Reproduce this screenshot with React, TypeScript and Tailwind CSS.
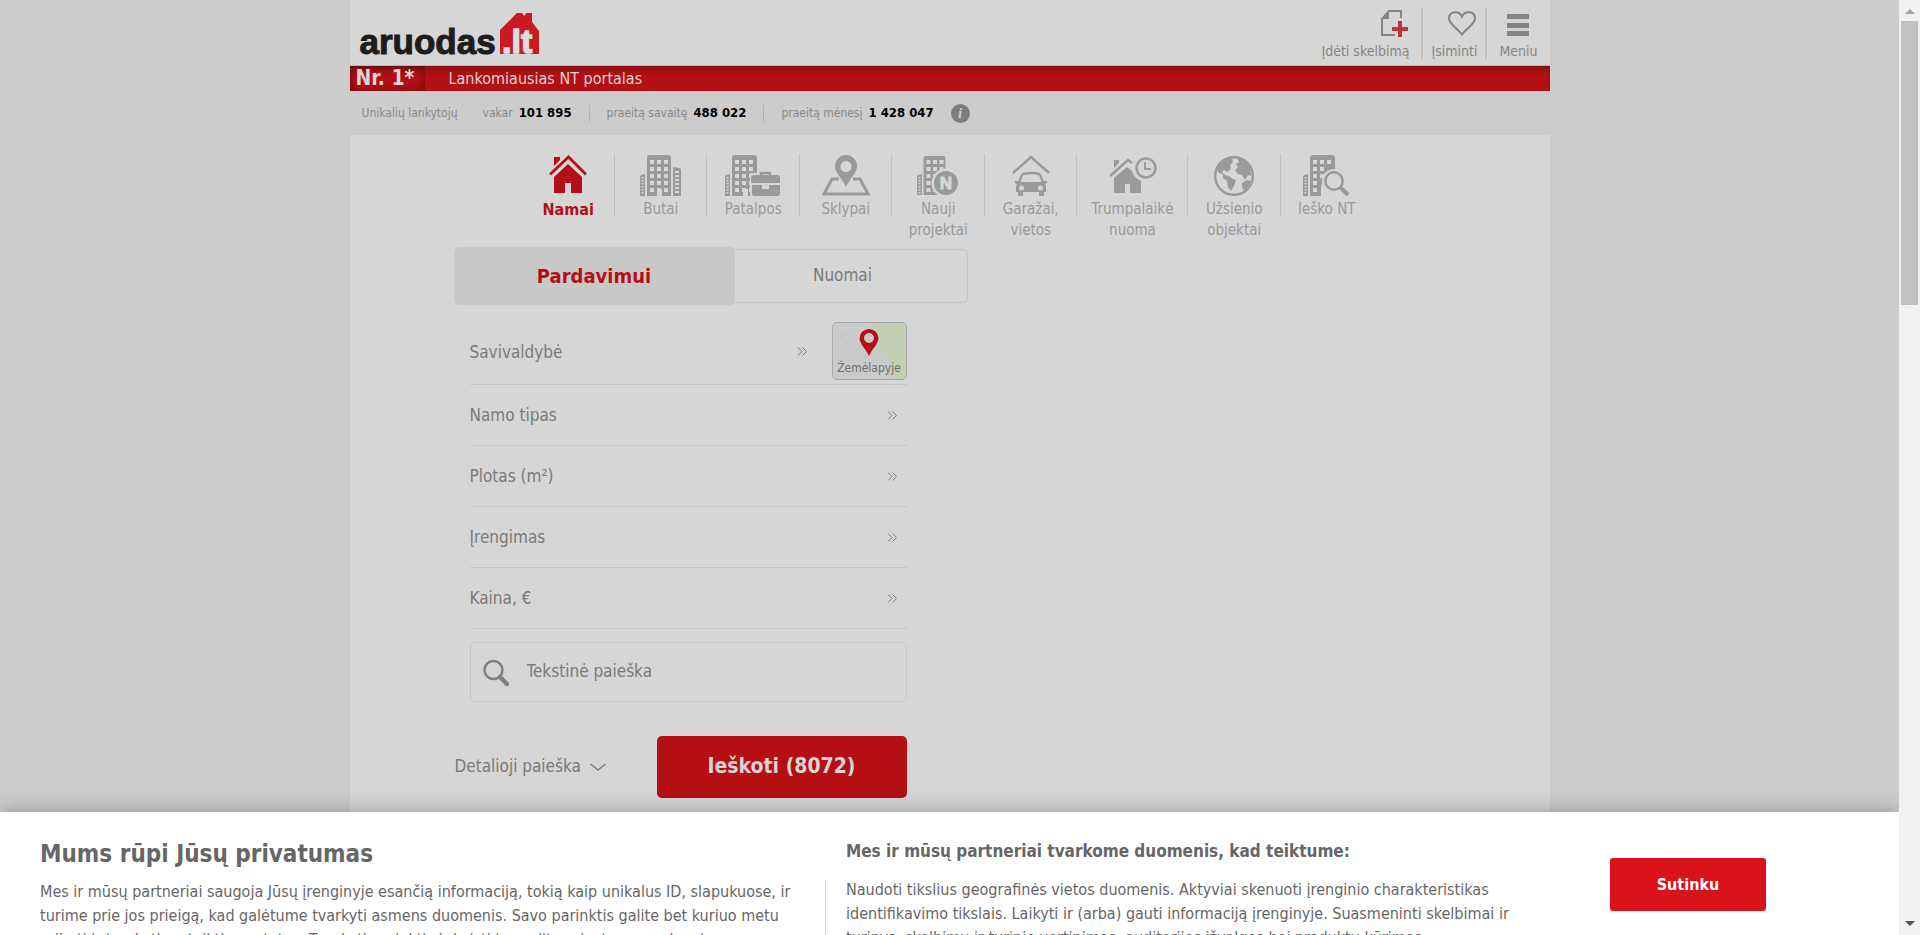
import React from "react";

const GREY = "#9a9a9a";
const BG = "#d6d6d6";

function Windows({ x, y, cols, rows, dx, dy, w, h }: { x: number; y: number; cols: number; rows: number; dx: number; dy: number; w: number; h: number }) {
  const items = [];
  for (let r = 0; r < rows; r++)
    for (let c = 0; c < cols; c++)
      items.push(<rect key={`${r}-${c}`} x={x + c * dx} y={y + r * dy} width={w} height={h} fill={BG} />);
  return <>{items}</>;
}

function LogoHouse() {
  return (
    <svg width="39" height="41" viewBox="0 0 39 41" aria-hidden="true">
      <path d="M0 41V17L17 0h5l2 3 2-2V0h6v9l7 9v23z" fill="#c81c22" />
      <text x="2" y="40" fontFamily="Liberation Sans, sans-serif" fontWeight="bold" fontSize="34" fill="#dcdcdc" stroke="#dcdcdc" strokeWidth="1.500">.lt</text>
    </svg>
  );
}

function HouseIcon() {
  return (
    <svg width="38" height="39" viewBox="0 0 38 39" fill="#b50f16" aria-hidden="true">
      <path d="M5 2h6v3L5 11z" />
      <path d="M1 19.500 19.500 2 37 19.500" fill="none" stroke="#b50f16" strokeWidth="2.800" />
      <path d="M5 38V22L19 9l14 13v16H22V28h-6v10z" />
    </svg>
  );
}

function FlatsIcon() {
  return (
    <svg width="42" height="41" viewBox="0 0 42 41" fill={GREY} aria-hidden="true">
      <path d="M7 41V3q0-3 3-3h18q3 0 3 3v38h-9v-7h-5v7z" />
      <Windows x={10} y={5} cols={3} rows={5} dx={7} dy={7} w={4} h={4} />
      <path d="M0 41V22q0-1 1-2l4-1v22zM33 41V12l6 1q2 0 2 2v26z" />
      <Windows x={1.500} y={22} cols={1} rows={6} dx={4} dy={3} w={2} h={1.500} />
      <Windows x={35} y={16} cols={1} rows={6} dx={4} dy={4} w={4} h={2} />
    </svg>
  );
}

function OfficeIcon() {
  return (
    <svg width="56" height="41" viewBox="0 0 56 41" fill={GREY} aria-hidden="true">
      <path d="M7 41V3q0-3 3-3h19q3 0 3 3v38h-9v-7h-5v7z" />
      <Windows x={10} y={5} cols={3} rows={5} dx={7} dy={7} w={4} h={4} />
      <path d="M0 41V22q0-1 1-2l4-1v22z" />
      <Windows x={1.500} y={22} cols={1} rows={6} dx={4} dy={3} w={2} h={1.500} />
      <rect x="25" y="18" width="31" height="23" fill={BG} />
      <path d="M36 20v-2h9v2" fill="none" stroke={BG} strokeWidth="6" />
      <path d="M36 22v-4h9v4" fill="none" stroke={GREY} strokeWidth="2.500" />
      <path d="M26 28v-5q0-3 3-3h23q3 0 3 3v5zM27 30h10v4h7v-4h11v8q0 3-3 3H29q-2 0-2-3z" />
    </svg>
  );
}

function PlotIcon() {
  return (
    <svg width="48" height="41" viewBox="0 0 48 41" aria-hidden="true">
      <path d="M17 24h-7L2 39h44l-8-15h-7" fill="none" stroke={GREY} strokeWidth="3" />
      <path d="M24 0a11 11 0 0 1 11 11c0 7-7 12-11 21C20 23 13 18 13 11A11 11 0 0 1 24 0zm0 6a5.500 5.500 0 1 0 0 11 5.500 5.500 0 0 0 0-11z" fill={GREY} fillRule="evenodd" />
    </svg>
  );
}

function ProjectsIcon() {
  return (
    <svg width="42" height="41" viewBox="0 0 42 41" fill={GREY} aria-hidden="true">
      <path d="M6.500 40V3q0-2 2-2h18q2 0 2 2v37z" />
      <Windows x={9.500} y={5} cols={3} rows={5} dx={6.500} dy={7} w={4} h={4} />
      <path d="M0 40V22q0-1 1-2l4-1v21z" />
      <Windows x={1.500} y={22} cols={1} rows={6} dx={4} dy={3} w={2} h={1.500} />
      <circle cx="29" cy="28" r="14.500" fill={BG} />
      <circle cx="29" cy="28" r="12" />
      <text x="29" y="34" textAnchor="middle" fontFamily="Liberation Sans, sans-serif" fontWeight="bold" fontSize="17" fill={BG} stroke={BG}>N</text>
    </svg>
  );
}

function GarageIcon() {
  return (
    <svg width="38" height="41" viewBox="0 0 38 41" fill={GREY} aria-hidden="true">
      <path d="M1 18 19 2l18 16" fill="none" stroke={GREY} strokeWidth="2.500" />
      <path d="M7 29q2-9 4-10 8-2 16 0 2 1 4 10" fill="none" stroke={GREY} strokeWidth="2.500" />
      <path d="M3 26h4v1h24v-1h4v2l-2 1q1 1 1 3v5h-2v4h-5v-4H11v4H6v-4H4v-5q0-2 1-3l-2-1z" />
      <circle cx="9.500" cy="33" r="2.500" fill={BG} />
      <circle cx="28.500" cy="33" r="2.500" fill={BG} />
    </svg>
  );
}

function ShortRentIcon() {
  return (
    <svg width="48" height="41" viewBox="0 0 48 41" fill={GREY} aria-hidden="true">
      <path d="M5 5h5v3l-5 5zM5 38V23L18 12l5 4q1 6 9 10v12h-11v-9h-5v9z" />
      <path d="M1 21 19 5l4 3" fill="none" stroke={GREY} strokeWidth="2.500" />
      <circle cx="37" cy="13" r="9.500" fill="none" stroke={GREY} strokeWidth="2.500" />
      <path d="M36 7v7h6" fill="none" stroke={GREY} strokeWidth="2" />
    </svg>
  );
}

function GlobeIcon() {
  return (
    <svg width="40" height="41" viewBox="0 0 40 41" fill={GREY} aria-hidden="true">
      <circle cx="20" cy="21" r="18.800" fill="none" stroke={GREY} strokeWidth="2.400" />
      <path d="M3 14Q8 4 18 3l1 4-3 3 1 4-4 3-3-2-2 2 3 3 4 1 4 3 3 1-2 6-3 5-3-4-1-6-4-3v-4l-4-1-2-3z" />
      <path d="m23 3 8 2 5 7 1 9-3-1-3 5-3-5-4-1-3-4 3-3-2-3 3-2zM28 28l5-3 4 1-3 6-4 4-2-4z" />
    </svg>
  );
}

function WantedIcon() {
  return (
    <svg width="47" height="41" viewBox="0 0 47 41" fill={GREY} aria-hidden="true">
      <path d="M7 41V3q0-3 3-3h18q4 0 4 3v12q-8 2-12 9l-2 8v9z" />
      <Windows x={10} y={5} cols={3} rows={1} dx={7} dy={7} w={4} h={4} />
      <Windows x={10} y={12} cols={2} rows={2} dx={7} dy={7} w={4} h={4} />
      <Windows x={10} y={26} cols={1} rows={2} dx={7} dy={7} w={4} h={4} />
      <path d="M0 41V22q0-1 1-2l4-1v22z" />
      <Windows x={1.500} y={22} cols={1} rows={6} dx={4} dy={3} w={2} h={1.500} />
      <circle cx="31" cy="26" r="12" fill={BG} />
      <circle cx="31" cy="26" r="8.700" fill="none" stroke={GREY} strokeWidth="2.500" />
      <path d="m37 32 8 8" stroke={GREY} strokeWidth="4" />
    </svg>
  );
}

const CATEGORIES = [
  { lines: ["Namai"], icon: <HouseIcon />, active: true },
  { lines: ["Butai"], icon: <FlatsIcon /> },
  { lines: ["Patalpos"], icon: <OfficeIcon /> },
  { lines: ["Sklypai"], icon: <PlotIcon /> },
  { lines: ["Nauji", "projektai"], icon: <ProjectsIcon /> },
  { lines: ["Garažai,", "vietos"], icon: <GarageIcon /> },
  { lines: ["Trumpalaikė", "nuoma"], icon: <ShortRentIcon /> },
  { lines: ["Užsienio", "objektai"], icon: <GlobeIcon /> },
  { lines: ["Ieško NT"], icon: <WantedIcon /> },
];

function DoubleChevron() {
  return (
    <svg width="11" height="9" viewBox="0 0 11 9" fill="none" stroke="#7c7c7c" strokeWidth="1" aria-hidden="true">
      <path d="m1 .5 4 4-4 4M5.500.5l4 4-4 4" />
    </svg>
  );
}

function FieldRow({ label }: { label: string }) {
  return (
    <button type="button" className="flex h-[61px] w-full items-center justify-between border-b border-[#c6c6c6] pr-[9px] text-left">
      <span className="pt-px">{label}</span>
      <DoubleChevron />
    </button>
  );
}

function Header() {
  return (
    <header className="flex h-[66px] justify-between border-b border-[#b8b8b8] pl-[10px] pr-3">
      <a href="#" className="flex items-end gap-1 pb-[11px]" aria-label="aruodas.lt">
        <span className="font-['Liberation_Sans',sans-serif] text-[35px] leading-6 font-bold text-[#1e1c1c] [-webkit-text-stroke:1px_#1e1c1c]">
          aruodas
        </span>
        <LogoHouse />
      </a>
      <nav className="flex pt-2 text-sm text-[#848484]">
        <a href="#" className="flex h-[51px] flex-col items-end justify-between border-r-2 border-[#c3c3c3] pr-3">
          <svg width="30" height="28" viewBox="0 0 30 28" className="mt-px" aria-hidden="true">
            <path d="M22 9V2H10L3 10v16h13" fill="none" stroke="#848484" strokeWidth="2" />
            <path d="M10 2v8H3z" fill="#848484" />
            <path d="M21 12v16M13 20h16" stroke="#b93434" strokeWidth="4" />
          </svg>
          <span className="leading-4">Įdėti skelbimą</span>
        </a>
        <a href="#" className="flex h-[51px] flex-col items-end justify-between border-r-2 border-[#c3c3c3] px-2">
          <svg width="30" height="26" viewBox="0 0 30 26" className="mt-[2px]" aria-hidden="true">
            <path d="M15 24.500C11 19 2 14 2 8.500 2 1 12 0 15 6.500 18 0 28 1 28 8.500c0 5.500-9 10.500-13 16z" fill="none" stroke="#848484" strokeWidth="2" />
          </svg>
          <span className="leading-4">Įsiminti</span>
        </a>
        <button className="flex h-[51px] flex-col items-center justify-between pl-3">
          <svg width="22" height="24" viewBox="0 0 22 24" className="mt-[5px]" fill="#848484" aria-hidden="true">
            <path d="M0 1h22v5H0zM0 10h22v5H0zM0 18h22v5H0z" />
          </svg>
          <span className="leading-4">Meniu</span>
        </button>
      </nav>
    </header>
  );
}

function Stat({ label, value }: { label: string; value: string }) {
  return (
    <span className="flex gap-[6px]">
      {label} <b className="text-[13px] text-black">{value}</b>
    </span>
  );
}

function Stats() {
  return (
    <div className="flex h-11 items-center bg-[#ccc] pl-3 text-xs leading-4 text-[#8a8a8a]">
      <span className="mr-[25px]">Unikalių lankytojų</span>
      <Stat label="vakar" value="101 895" />
      <i className="mx-[17px] h-[17px] w-px bg-[#b5b5b5]" />
      <Stat label="praeitą savaitę" value="488 022" />
      <i className="mx-[17px] h-[17px] w-px bg-[#b5b5b5]" />
      <Stat label="praeitą mėnesį" value="1 428 047" />
      <button className="ml-[17px] flex size-[19px] items-center justify-center rounded-full bg-[#7d7d7d] font-['Liberation_Serif',serif] text-[15px] font-bold text-[#ccc] italic" aria-label="Informacija">
        i
      </button>
    </div>
  );
}

function Search() {
  return (
    <form className="ml-[104px] w-[514px] text-[17px] text-[#7a7a7a]" onSubmit={(e) => e.preventDefault()}>
      <div className="flex items-center">
        <button type="button" className="h-[58px] w-[281px] rounded-[5px] bg-[#c8c8c8] text-[20px] font-bold text-[#b50f16]">
          Pardavimui
        </button>
        <button type="button" className="h-[54px] flex-1 rounded-r-[6px] border border-l-0 border-[#c3c3c3] pr-4">
          Nuomai
        </button>
      </div>
      <div className="ml-4 mr-[61px] mt-[13px]">
        <div className="flex h-[67px] items-center gap-6 border-b border-[#c6c6c6]">
          <button type="button" className="flex flex-1 items-center justify-between text-left">
            <span className="pt-1">Savivaldybė</span>
            <DoubleChevron />
          </button>
          <button type="button" className="relative flex h-[58px] w-[75px] flex-col items-center justify-between overflow-hidden rounded-[5px] border border-[#a9a9a9] bg-[#cacaca] pt-[6px] pb-[3px] text-xs leading-4 text-[#707070]">
            <svg width="75" height="58" viewBox="0 0 75 58" className="absolute inset-0" aria-hidden="true">
              <path d="M40 0h35v58H60l-2-24-9-5z" fill="#c4ceb2" />
              <path d="m2 8 8-3 6 6-5 9-9 2M36 0l-9 7v14" fill="none" stroke="#cfcfcf" strokeWidth="1.500" />
            </svg>
            <svg width="20" height="27" viewBox="0 0 20 27" className="relative" aria-hidden="true">
              <path d="M10 0a9.500 9.500 0 0 1 9.500 9C19.500 15 13 20 10 27 7 20 .5 15 .5 9A9.500 9.500 0 0 1 10 0zm0 4a5 5 0 1 0 0 10 5 5 0 0 0 0-10z" fill="#b50f16" fillRule="evenodd" />
            </svg>
            <span className="relative">Žemėlapyje</span>
          </button>
        </div>
        <FieldRow label="Namo tipas" />
        <FieldRow label="Plotas (m²)" />
        <FieldRow label="Įrengimas" />
        <FieldRow label="Kaina, €" />
        <label className="mt-[13px] flex h-[60px] items-center gap-[18px] rounded-[5px] border border-[#c6c6c6] pl-3">
          <svg width="26" height="27" viewBox="0 0 26 27" fill="none" stroke="#7f7f7f" aria-hidden="true">
            <circle cx="10.500" cy="11" r="9" strokeWidth="2.500" />
            <path d="m17 18 7 7" strokeWidth="4.500" strokeLinecap="round" />
          </svg>
          <input type="text" aria-label="Tekstinė paieška" placeholder="Tekstinė paieška" className="min-w-0 flex-1 bg-transparent placeholder:text-[#7a7a7a] focus:outline-none" />
        </label>
      </div>
      <div className="mr-[61px] mt-[34px] flex items-center justify-between">
        <button type="button" className="flex items-center gap-[9px] pl-px">
          Detalioji paieška
          <svg width="16" height="8" viewBox="0 0 16 8" fill="none" stroke="#7f7f7f" strokeWidth="1.500" aria-hidden="true">
            <path d="m.5 1 7.500 6 7.500-6" />
          </svg>
        </button>
        <button className="h-[62px] w-[250px] rounded-[5px] bg-[#b50f16] text-[21px] font-bold text-[#d8d4d4]">Ieškoti (8072)</button>
      </div>
    </form>
  );
}

function Consent() {
  return (
    <section className="absolute inset-x-0 bottom-0 flex h-[123px] bg-white text-[#666] shadow-[0_0_20px_rgba(0,0,0,0.3)]">
      <div className="flex h-full w-full overflow-hidden text-base leading-6">
        <div className="w-[825px] shrink-0 pl-10 pt-[26px]">
          <h2 className="text-2xl leading-8 font-bold">Mums rūpi Jūsų privatumas</h2>
          <p className="mt-[10px] whitespace-nowrap">
            Mes ir mūsų partneriai saugoja Jūsų įrenginyje esančią informaciją, tokią kaip unikalus ID, slapukuose, ir
            <br />
            turime prie jos prieigą, kad galėtume tvarkyti asmens duomenis. Savo parinktis galite bet kuriuo metu
            <br />
            priimti ir tvarkyti, pateikti nuostatas. Tvarkyti parinktis ir keisti jas galite privatumo puslapyje
          </p>
        </div>
        <div className="mt-[68px] w-px shrink-0 bg-[#d4d4d4]" />
        <div className="w-[720px] shrink-0 pl-5 pt-[27px]">
          <h3 className="text-[17px] leading-6 font-bold">Mes ir mūsų partneriai tvarkome duomenis, kad teiktume:</h3>
          <p className="mt-[15px] whitespace-nowrap">
            Naudoti tikslius geografinės vietos duomenis. Aktyviai skenuoti įrenginio charakteristikas
            <br />
            identifikavimo tikslais. Laikyti ir (arba) gauti informaciją įrenginyje. Suasmeninti skelbimai ir
            <br />
            turinys, skelbimų ir turinio vertinimas, auditorijos įžvalgos bei produktų kūrimas.
          </p>
        </div>
        <button className="ml-16 mt-[46px] h-[53px] w-[156px] shrink-0 rounded-[3px] bg-[#da121a] text-base font-bold text-white">Sutinku</button>
      </div>
    </section>
  );
}

export default function App() {
  return (
    <div className="flex h-screen overflow-hidden font-['DejaVu_Sans_Condensed','DejaVu_Sans',sans-serif]">
      <div className="relative flex-1 overflow-hidden bg-[#ccc]">
        <div className="mx-auto min-h-screen max-w-[1200px] bg-[#d6d6d6]">
          <Header />
          <div className="flex h-[25px] items-center bg-[#b50f16] text-base text-[#dcd4d4] shadow-[inset_0_5px_6px_-2px_rgba(80,20,20,0.6)]">
            <b className="h-full w-[75px] pl-[6px] text-[21px] leading-[25px] shadow-[inset_0_0_10px_rgba(60,10,10,0.6)]">Nr. 1*</b>
            <span className="ml-6">Lankomiausias NT portalas</span>
          </div>
          <Stats />
          <div className="pr-1">
            <nav className="mx-auto grid w-[851px] grid-cols-[repeat(6,5fr)_6fr_5fr_5fr] pt-[19px] text-[15px] leading-[21px] text-[#999]">
              {CATEGORIES.map((c, i) => (
                <a key={c.lines[0]} href="#" className="relative flex h-[93px] flex-col items-center text-center">
                  <span className="flex h-[45px] items-start pt-px">{c.icon}</span>
                  {c.lines.map((l) => (
                    <span key={l} className={c.active ? "text-base leading-[21px] font-bold text-[#b50f16]" : ""}>
                      {l}
                    </span>
                  ))}
                  {i < CATEGORIES.length - 1 && <i className="absolute top-0 right-0 h-[63px] w-px bg-[#c0c0c0]" />}
                </a>
              ))}
            </nav>
          </div>
          <Search />
        </div>
        <Consent />
      </div>
      <div className="flex w-[21px] flex-col items-center justify-between bg-[#f1f1f1]">
        <div className="flex flex-col items-center">
          <svg width="10" height="21" viewBox="0 0 10 21" aria-hidden="true">
            <path d="M0 14 5 9l5 5z" fill="#a3a3a3" />
          </svg>
          <div className="h-[284px] w-[17px] bg-[#c1c1c1]" />
        </div>
        <svg width="10" height="21" viewBox="0 0 10 21" aria-hidden="true">
          <path d="m0 7 5 5 5-5z" fill="#505050" />
        </svg>
      </div>
    </div>
  );
}
